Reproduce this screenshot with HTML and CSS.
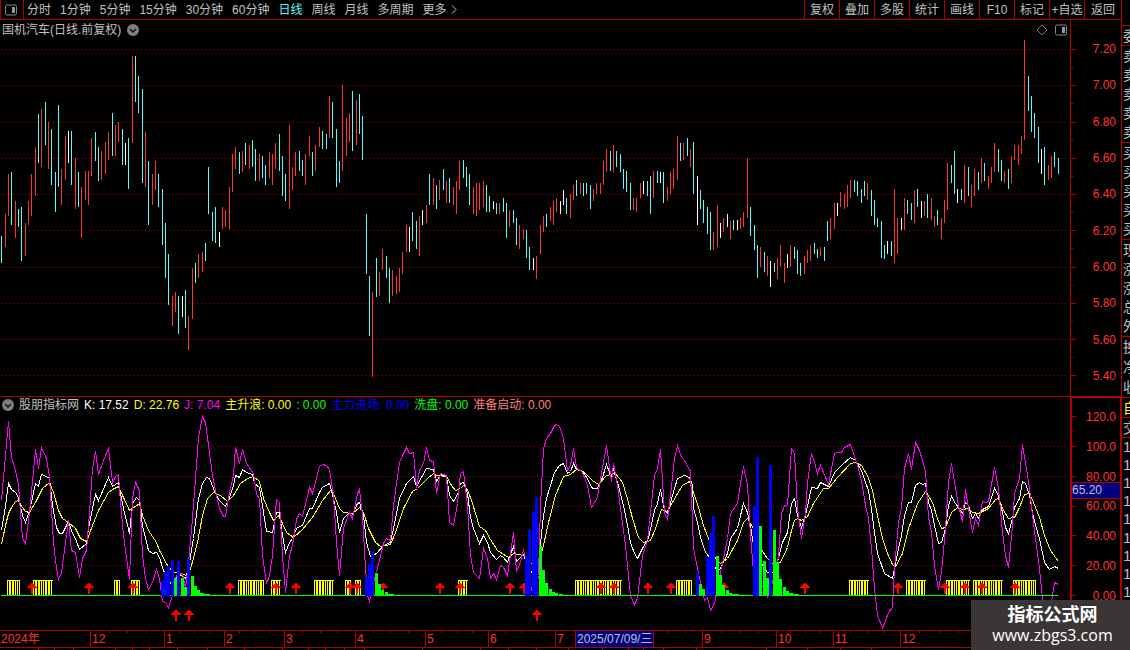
FILE: index.html
```
<!DOCTYPE html>
<html lang="zh-CN">
<head>
<meta charset="UTF-8" />
<meta name="viewport" content="width=device-width, initial-scale=1.0"/>
<title>国机汽车 日线</title>
<link rel="stylesheet" href="styles.css">
</head>
<body>
<div class="app">
    <main class="main">
        <nav class="toolbar">
            <button class="layout-btn" aria-label="布局">
                <svg width="12" height="12" viewBox="0 0 12 12"><rect x="0.5" y="1" width="11" height="10" rx="1.5" fill="none" stroke="#888"/><rect x="7" y="3" width="3" height="6" fill="#999"/></svg>
            </button>
            <div class="periods">
                <button>分时</button>
                <button>1分钟</button>
                <button>5分钟</button>
                <button>15分钟</button>
                <button>30分钟</button>
                <button>60分钟</button>
                <button class="active">日线</button>
                <button>周线</button>
                <button>月线</button>
                <button>多周期</button>
                <button class="more">更多<svg width="6" height="9" viewBox="0 0 6 9"><path d="M1 0.5 L5 4.5 L1 8.5" fill="none" stroke="#c0c0c0"/></svg></button>
            </div>
            <div class="actions">
                <button>复权</button>
                <button>叠加</button>
                <button>多股</button>
                <button>统计</button>
                <button>画线</button>
                <button>F10</button>
                <button>标记</button>
                <button>+自选</button>
                <button>返回</button>
            </div>
        </nav>

        <section class="panel price">
            <div class="plot">
                <svg id="price-chart" viewBox="0 20 1070 376" preserveAspectRatio="none"></svg>
                <div class="title">
                    <span>国机汽车(日线.前复权)</span>
                    <svg width="12" height="12" viewBox="0 0 12 12"><circle cx="6" cy="6" r="6" fill="#808080"/><path d="M3 5 L6 8 L9 5" fill="none" stroke="#111" stroke-width="1.5"/></svg>
                </div>
                <div class="tools">
                    <svg width="12" height="12" viewBox="0 0 12 12"><path d="M6 1 L11 6 L6 11 L1 6 Z" fill="none" stroke="#777"/></svg>
                    <svg width="12" height="12" viewBox="0 0 12 12"><rect x="0.5" y="1" width="11" height="10" rx="1.5" fill="none" stroke="#888"/><rect x="7" y="3" width="3" height="6" fill="#999"/></svg>
                </div>
            </div>
            <div class="axis">
                <svg id="price-ticks" class="ticks" viewBox="0 20 8 376" preserveAspectRatio="none"></svg>
                <span>7.20</span><span>7.00</span><span>6.80</span><span>6.60</span><span>6.40</span>
                <span>6.20</span><span>6.00</span><span>5.80</span><span>5.60</span><span>5.40</span>
            </div>
        </section>

        <section class="panel indicator">
            <div class="plot">
                <svg id="kdj-chart" viewBox="0 397 1070 233" preserveAspectRatio="none"></svg>
                <div class="title legend">
                    <svg width="12" height="12" viewBox="0 0 12 12"><circle cx="6" cy="6" r="6" fill="#808080"/><path d="M3 5 L6 8 L9 5" fill="none" stroke="#111" stroke-width="1.5"/></svg>
                    <span class="name">股朋指标网</span>
                    <span class="white">K: 17.52</span>
                    <span class="yellow">D: 22.76</span>
                    <span class="magenta">J: 7.04</span>
                    <span class="yellow">主升浪: 0.00</span>
                    <span class="green">: 0.00</span>
                    <span class="blue">主力进场: 0.00</span>
                    <span class="green">洗盘: 0.00</span>
                    <span class="pink">准备启动: 0.00</span>
                </div>
            </div>
            <div class="axis">
                <svg id="kdj-ticks" class="ticks" viewBox="0 398 8 232" preserveAspectRatio="none"></svg>
                <span>120.0</span><span>100.0</span><span>80.00</span><span>60.00</span>
                <span>40.00</span><span>20.00</span><span>0.00</span>
                <b class="cursor-value">65.20</b>
            </div>
        </section>

        <footer class="timeline">
            <svg id="time-ticks" viewBox="0 630 1070 20" preserveAspectRatio="none"></svg>
            <div class="months">
                <span>2024年</span><span>12</span><span>1</span><span>2</span><span>3</span><span>4</span><span>5</span><span>6</span><span>7</span>
                <span class="cursor-date">2025/07/09/三</span>
                <span>9</span><span>10</span><span>11</span><span>12</span>
            </div>
        </footer>
    </main>

    <aside class="quote">
        <div class="head"></div>
        <div class="rows single"><span>委</span></div>
        <div class="rows"><span>卖</span><span>卖</span><span>卖</span><span>卖</span><span>卖</span></div>
        <div class="rows"><span>买</span><span>买</span><span>买</span><span>买</span><span>买</span></div>
        <div class="rows"><span>现</span><span>涨</span><span>涨</span><span>总</span><span>外</span></div>
        <div class="rows three"><span>换</span><span>净</span><span>收</span></div>
        <div class="rows single own"><span>自</span></div>
        <div class="rows single"><span>交</span></div>
        <div class="rows trades"><span>1</span><span>1</span><span>1</span><span>1</span><span>1</span><span>1</span><span>1</span><span>1</span><span>1</span></div>
    </aside>

    <div class="watermark">
        <strong>指标公式网</strong>
        <span>www.zbgs3.com</span>
    </div>
</div>
<script src="chart.js"></script>
</body>
</html>
```
FILE: styles.css
```
* {
    box-sizing: border-box;
}
body {
    margin: 0;
    background-color: #000;
    color: #c0c0c0;
    font-family: "Liberation Sans", "Noto Sans CJK SC", sans-serif;
    font-size: 12px;
    line-height: 16px;
}
button {
    font: inherit;
    color: inherit;
    background: none;
    border: none;
    padding: 0;
    cursor: pointer;
    white-space: nowrap;
}
svg {
    display: block;
}
.app {
    position: relative;
    display: grid;
    grid-template-columns: 1fr 9px;
    height: 100vh;
    overflow: hidden;
}
.main {
    display: flex;
    flex-direction: column;
    min-width: 0;
}
.toolbar {
    display: flex;
    height: 20px;
    border-bottom: 1px solid #b00000;
}
.layout-btn {
    width: 24px;
    padding-left: 4px;
    border-left: 1px solid #b00000;
    border-right: 1px solid #b00000;
}
.periods {
    display: flex;
    gap: 9px;
    padding-left: 3px;
}
.periods .active { color: #54fcfc; }
.more {
    display: flex;
    align-items: center;
    gap: 4px;
}
.actions {
    display: flex;
    margin-left: auto;
}
.actions button {
    width: 35px;
    border-left: 1px solid #b00000;
}
.actions button:last-child { width: 37px; }
.panel {
    display: grid;
    grid-template-columns: 1fr 51px;
    min-height: 0;
}
.price { flex: 376; }
.indicator {
    flex: 233;
    border-top: 1px solid #b00000;
}
.plot {
    position: relative;
    min-width: 0;
    min-height: 0;
}
.plot > svg {
    position: absolute;
    width: 100%;
    height: 100%;
}
.title {
    position: relative;
    display: flex;
    align-items: center;
    gap: 6px;
    padding: 2px 2px 0;
    white-space: nowrap;
}
.legend { padding-top: 0; gap: 5px; }
.tools {
    position: absolute;
    top: 4px;
    right: 3px;
    display: flex;
    gap: 7px;
}
.axis {
    position: relative;
    display: flex;
    flex-direction: column;
    justify-content: space-between;
    border-left: 1px solid #b00000;
    padding: 21px 5px 12px 0;
    color: #ff3232;
    text-align: right;
    min-height: 0;
}
.indicator .axis {
    padding: 11px 4px 26px 0;
    border: 2px solid #b00000;
    border-top-width: 1px;
    border-bottom: none;
    border-right-width: 1px;
}
.ticks {
    position: absolute;
    left: 0;
    top: 0;
    width: 8px;
    height: 100%;
}
.cursor-value {
    position: absolute;
    top: 84px;
    left: 0;
    right: 0;
    background-color: #000080;
    border-top: 1px solid #b00000;
    border-bottom: 1px solid #b00000;
    color: #c0c0c0;
    font-weight: normal;
    text-align: left;
    line-height: 15px;
}
.timeline {
    position: relative;
    height: 20px;
    border-top: 1px solid #b00000;
}
.timeline svg {
    position: absolute;
    top: -1px;
    left: 0;
    width: calc(100% - 51px);
    height: 20px;
}
.months {
    display: grid;
    grid-template-columns: 90fr 74fr 60fr 60fr 71fr 70fr 63fr 67fr 20fr 79fr 48fr 74fr 67fr 278fr;
    grid-template-columns: 90fr 74fr 60fr 60fr 71fr 70fr 63fr 67fr 20fr 127fr 74fr 57fr 67fr 221fr;
    height: 17px;
    border-bottom: 1px solid #b00000;
    color: #ff3232;
    line-height: 16px;
}
.months span {
    border-left: 1px solid #b00000;
    padding-left: 1px;
    white-space: nowrap;
    min-width: 0;
}
.months span:first-child { border-left: none; }
.months .cursor-date {
    justify-self: start;
    width: 79px;
    background-color: #000080;
    border-right: 1px solid #b00000;
    color: #c0c0c0;
}
.white { color: #fff; }
.yellow { color: #ff0; }
.magenta { color: #f0f; }
.green { color: #0f0; }
.blue { color: #00f; }
.pink { color: #ff8080; }
.quote {
    border-left: 1px solid #b00000;
    overflow: hidden;
}
.head {
    height: 26px;
    border-bottom: 1px solid #b00000;
}
.rows {
    display: flex;
    flex-direction: column;
    justify-content: space-around;
    height: 97px;
    padding-left: 1px;
    border-bottom: 1px solid #b00000;
    font-size: 14px;
}
.single { height: 20px; }
.three { height: 61px; }
.own { color: #ff0; }
.trades { height: 164px; }
.trades span { font-size: 15px; }
.watermark {
    position: absolute;
    right: 0;
    bottom: 0;
    width: 159px;
    height: 50px;
    padding-left: 4px;
    background-color: #3b3636;
    color: #fff;
    text-align: center;
    display: flex;
    flex-direction: column;
    justify-content: center;
    line-height: 20px;
}
.watermark strong { font-size: 18px; }
.watermark span {
    font-family: "Open Sans", sans-serif;
    font-size: 16px;
}
```
FILE: chart.js
```
// x, high, low, per bar: r = up, d = down, w = unchanged
const bars = `
d1,236,263 r5,214,247 r8,174,216 d11,172,225 r15,201,238 d18,209,227 d21,207,261 r25,223,256 r28,201,225 r31,174,216
r35,147,196 d38,114,163 r41,109,167 d45,102,145 r48,122,169 d51,129,185 d55,172,212 d58,105,187 r61,169,205 r65,136,180
w68,131,163 d71,131,185 r75,158,209 d78,172,207 r81,187,238 r85,171,200 r88,171,205 r91,138,176 d95,132,161 d98,147,181
r101,151,180 r105,142,174 r108,132,160 d112,113,156 r115,125,156 r118,122,142 d122,129,165 w125,143,165 d128,138,189 r132,56,143
d135,56,102 d138,76,113 d142,89,183 r145,132,187 d148,161,225 r152,174,205 r155,161,190 d158,174,207 d162,189,245 d165,223,278
d168,254,305 r172,296,326 r175,292,312 d178,296,334 w182,296,317 d185,290,328 r188,316,350 r192,268,319 d195,263,283 r198,254,278
r202,252,272 d205,243,261 d208,167,214 d212,212,241 d215,207,243 w219,232,247 r222,207,229 r225,210,227 r229,187,229 r232,154,192
r235,147,169 d239,152,174 r242,151,172 d245,143,165 r249,145,169 d252,140,167 d255,149,181 r259,154,181 d262,156,178 d265,165,185
r269,152,178 r272,154,185 r275,143,169 d279,134,171 d282,156,196 d285,174,201 r289,125,209 r292,167,190 r295,152,176 d299,151,171
d302,160,176 r305,154,185 r309,136,156 d312,152,176 r315,145,171 r319,127,147 d322,131,149 d326,134,149 r329,96,138 d332,102,138
d336,129,187 d339,161,183 r342,85,171 r346,118,156 r349,113,142 d352,91,151 r356,100,145 d359,94,134 d362,116,160 d366,214,274
d369,276,336 r372,292,377 d376,258,297 r379,272,296 r382,249,270 d386,256,278 d389,268,303 r392,270,296 r396,276,294 r399,268,292
r402,252,274 r406,225,252 w409,227,252 d412,212,241 d416,221,249 r419,216,256 w422,210,225 r426,205,223 d429,174,205 r433,178,205
d436,185,209 r439,180,200 d443,169,190 r446,181,203 d449,178,203 r453,187,205 r456,181,214 r459,161,190 d463,160,178 d466,167,187
d469,174,205 r473,187,214 r476,183,216 r479,183,210 r483,181,207 d486,185,212 d489,196,212 w493,201,209 d496,203,214 r499,203,214
d503,198,212 d506,203,238 r509,210,227 d513,210,223 d516,218,245 r519,225,249 r523,229,239 d526,230,258 d529,247,270 w533,258,270
r536,256,279 r540,225,254 r543,216,232 d546,214,227 r550,207,221 r553,201,225 r556,198,212 w560,201,214 w563,190,205 d566,198,214
r570,194,218 r573,185,200 d576,180,196 r580,183,194 d583,183,196 d586,183,194 d590,185,209 r593,189,201 r596,183,194 r600,183,194
r603,161,185 r606,149,172 d610,151,171 r613,145,172 d616,151,167 d620,154,172 d623,169,189 d626,171,192 d630,183,210 r633,198,210
r636,198,212 r640,183,198 w643,181,194 d647,181,196 d650,176,214 r653,171,198 d657,171,183 w660,172,183 d663,172,203 r667,187,201
r670,172,194 r673,169,189 r677,136,180 d680,143,161 r683,143,160 d687,138,156 r690,149,167 d693,142,194 w697,176,225 d700,190,209
d703,200,223 d707,207,234 d710,212,250 r713,232,250 r717,205,247 w720,223,238 r723,218,232 w727,214,227 r730,221,239 d733,220,230
w737,220,230 r740,218,229 r743,212,227 r747,158,218 d750,207,236 d754,225,250 d757,245,278 r760,247,267 d764,252,272 r767,256,276
w770,261,287 d774,263,272 r777,258,279 r780,245,267 r784,263,283 w787,254,268 r790,245,267 d794,247,259 d797,250,274 d800,263,276
r804,256,274 r807,250,263 r810,245,261 d814,243,254 d817,249,258 r820,247,256 d824,247,261 d827,221,241 r830,218,239 r834,203,229
w837,203,216 r840,192,207 r844,194,209 r847,185,207 r850,180,198 d854,180,192 d857,181,196 d861,189,203 d864,181,196 r867,183,200
d871,190,216 d874,200,225 d877,218,227 d881,221,258 d884,245,259 w887,241,254 d891,241,256 r894,189,263 r897,218,254 w901,218,230
r904,198,230 d907,200,214 d911,203,220 r914,190,223 d917,189,207 w921,201,218 r924,201,216 d927,194,218 r931,198,220 r934,216,227
d937,210,225 r941,218,239 r944,200,223 r947,163,210 d951,165,183 d954,151,194 w957,189,203 d961,189,200 r964,165,203 d968,167,196
r971,185,207 r974,169,196 d978,172,190 r981,158,183 d984,163,181 r988,176,189 r991,167,183 r994,143,172 d998,149,172 d1001,160,181
r1004,171,183 d1008,169,189 r1011,156,183 r1014,145,160 r1018,145,165 r1021,136,154 r1024,40,140 d1028,76,111 d1031,96,132 d1034,113,138
d1038,127,163 w1041,149,174 d1044,147,185 r1048,165,180 r1051,156,178 d1054,152,167 d1058,158,174`;

const lineJ = '1,500 8,421 11,457 15,470 18,485 22,538 25,543 29,512 35,449 38,468 41,447 46,458 49,477 53,542 56,568 58,579 61,572 68,520 71,550 75,552 79,577 82,558 86,550 89,512 92,468 95,451 98,474 103,460 108,448 112,482 115,476 118,474 120,502 123,535 129,579 132,498 135,482 139,490 142,555 145,578 148,589 152,582 156,569 159,578 162,601 165,602 168,607 172,595 175,577 178,573 182,573 185,588 188,562 192,518 198,437 202,416 205,422 212,475 216,495 219,508 223,516 225,516 229,492 233,475 235,447 239,463 242,449 246,463 253,473 256,494 259,498 262,555 266,583 269,575 272,555 276,499 279,502 282,555 285,592 289,555 292,545 296,519 299,513 302,516 309,487 312,493 319,466 322,464 326,465 329,469 333,495 336,542 339,575 343,528 347,517 349,512 352,518 357,493 359,489 362,515 365,568 367,595 369,601 372,585 376,572 383,543 386,538 390,540 393,505 399,462 402,455 406,447 409,453 413,452 416,487 419,470 423,463 426,447 429,460 433,461 436,493 440,473 446,475 449,522 453,525 457,503 460,473 463,471 467,505 470,555 473,572 479,578 483,548 487,558 490,578 493,573 496,579 500,565 503,567 507,575 513,532 516,571 520,562 523,550 527,565 531,590 536,590 538,575 540,505 543,448 546,438 550,433 554,425 556,424 559,426 563,438 567,470 570,465 573,448 576,467 582,472 587,485 591,507 597,497 600,478 606,445 611,481 613,463 617,485 620,508 625,545 630,595 634,604 637,598 642,555 647,540 650,512 654,475 657,468 660,449 664,512 667,519 670,495 674,458 677,445 681,457 684,460 690,471 693,548 697,568 700,582 704,600 707,597 710,610 714,603 718,582 723,558 727,538 730,513 737,503 740,483 743,466 747,485 750,535 753,572 757,580 763,587 767,596 772,582 778,555 781,513 784,505 787,505 791,448 794,453 797,508 801,538 805,512 807,482 811,453 814,462 817,473 820,465 828,484 834,453 837,452 841,452 844,447 850,444 857,465 861,480 865,505 868,518 871,548 874,588 877,615 882,627 884,623 888,612 892,607 894,568 898,522 901,507 904,468 908,453 911,469 915,442 919,450 922,460 925,471 928,517 931,532 934,565 938,589 941,572 945,528 948,482 951,463 955,488 958,505 962,521 965,489 968,508 972,532 975,518 978,525 982,501 985,502 988,501 994,467 998,488 1002,532 1005,555 1008,567 1012,525 1014,493 1019,478 1022,444 1025,462 1029,488 1032,515 1035,538 1039,568 1042,598 1046,612 1051,602 1054,582 1058,584';
const lineK = '1,530 5,505 8,483 11,489 15,492 18,497 22,515 25,522 29,510 32,497 35,483 38,486 41,474 46,476 49,478 52,505 56,527 59,533 62,533 68,521 72,533 75,538 79,549 86,543 88,528 92,508 95,494 98,500 108,477 112,486 118,482 123,508 129,533 132,503 136,497 139,500 142,525 148,550 152,553 156,552 159,557 163,570 168,580 173,586 178,573 185,578 188,568 193,538 198,498 202,483 206,477 209,478 215,493 219,500 225,506 229,497 233,485 235,475 239,477 242,469 246,472 252,474 254,483 259,487 263,512 266,531 272,532 276,512 279,512 282,535 285,552 289,542 292,538 296,528 299,526 302,525 309,508 312,508 319,492 322,487 329,483 333,498 336,512 339,532 343,518 349,512 352,514 357,503 359,502 363,515 366,542 370,556 376,553 383,545 390,542 393,528 399,498 406,483 413,476 416,486 426,468 433,469 436,481 440,474 446,476 449,495 453,501 457,494 460,483 463,482 467,493 470,517 473,528 479,543 483,535 487,542 490,552 496,559 500,555 503,557 507,562 513,546 516,561 523,554 527,565 532,573 538,562 543,515 546,498 550,485 554,472 559,465 563,463 567,473 570,471 573,463 576,469 582,471 587,478 591,487 593,488 597,488 602,477 606,464 611,477 613,469 617,482 623,505 627,525 630,542 634,553 637,558 642,548 648,538 654,510 657,503 660,489 664,510 667,513 672,495 677,478 684,475 689,477 692,485 693,508 697,522 700,537 705,552 710,558 717,571 720,568 727,553 730,538 737,528 740,515 743,503 747,512 750,525 753,545 760,562 767,572 773,572 778,558 782,542 787,532 791,503 794,498 797,515 801,527 805,515 811,487 817,488 820,482 828,486 834,472 841,465 850,457 855,460 861,470 865,482 868,490 871,508 874,532 877,553 884,573 892,578 894,568 898,548 901,535 904,515 908,502 911,502 915,485 919,482 922,484 925,483 928,502 931,510 934,525 938,543 941,542 945,528 948,505 951,496 955,503 962,513 965,502 968,505 972,518 975,513 978,518 982,509 988,506 994,488 998,495 1002,512 1005,527 1008,533 1012,518 1014,507 1019,498 1022,481 1025,483 1029,495 1032,512 1035,525 1039,538 1044,562 1049,569 1054,566 1058,568';
const lineD = '1,544 5,525 8,513 11,507 15,501 18,500 22,507 25,511 29,512 35,502 42,488 49,482 53,492 58,510 62,518 68,522 75,528 80,538 86,541 92,525 98,510 108,492 112,489 118,486 123,497 129,510 132,508 139,503 142,515 148,530 156,542 159,550 167,565 173,572 182,573 187,576 191,565 197,542 202,515 207,498 213,492 220,495 227,501 233,495 240,483 247,478 253,476 259,481 263,498 269,512 273,520 278,515 282,523 286,532 293,537 302,529 312,517 322,500 330,490 333,493 339,508 343,512 352,513 359,507 363,512 368,528 375,542 380,546 390,544 395,532 403,508 412,491 417,488 427,478 433,473 436,475 446,476 451,485 455,490 460,488 463,485 467,489 472,503 479,526 485,530 490,539 497,550 508,557 513,553 523,555 530,563 538,563 543,545 548,522 555,495 563,476 570,474 576,469 583,471 592,480 598,484 606,475 615,473 622,482 627,498 632,518 638,537 643,542 650,540 655,528 661,509 667,511 673,500 682,485 689,481 693,492 698,507 703,525 708,538 713,555 720,563 727,558 737,540 743,522 747,518 753,528 760,548 767,558 773,564 780,562 787,547 791,530 794,520 797,518 801,520 807,516 813,503 823,488 828,488 837,477 850,463 855,462 861,465 867,475 872,490 877,515 882,538 887,553 892,564 895,566 902,553 908,528 911,520 917,503 925,491 932,502 937,518 941,528 945,527 951,512 957,507 962,509 968,508 972,512 978,513 988,508 995,499 998,498 1003,510 1008,518 1014,517 1019,507 1024,494 1029,493 1033,502 1039,517 1044,535 1050,550 1058,561';

// x, width, top
const blueBars = [[161,3,581],[164,3,572],[167,3,566],[171,3,560],[177,3,561],[187,3,558],[365,3,577],[368,3,564],[371,3,551],[525,3,555],[528,3,530],[532,3,512],[535,3,497],[696,3,573],[706,3,557],[709,3,534],[712,3,516],[753,3,506],[756,3,457],[769,3,465]];
const greenBars = [[174,3,578],[181,3,578],[184,3,587],[191,3,576],[194,3,586],[197,3,590],[200,4,593],[204,6,594],[375,3,573],[378,3,584],[381,3,590],[385,3,592],[388,6,594],[539,3,546],[542,3,570],[545,3,583],[549,3,589],[552,3,592],[555,3,593],[559,4,594],[699,3,584],[702,3,589],[716,3,556],[719,3,575],[722,3,585],[726,3,590],[729,3,593],[732,7,594],[759,3,526],[763,3,561],[766,3,578],[773,3,530],[776,3,562],[779,3,579],[783,3,587],[786,3,591],[789,4,593],[793,6,594]];
const combs = [[7,20],[33,53],[114,120],[131,140],[238,264],[271,281],[314,334],[345,351],[355,361],[458,468],[575,622],[676,692],[849,869],[906,926],[946,970],[973,1003],[1013,1036]];
const arrows = [32,89,133,230,276,296,350,357,383,440,460,510,524,601,614,648,671,724,805,898,945,965,982,1015];
const lowArrows = [176,189,537];

const colors = { r: '#ff3232', d: '#54fcfc', w: '#ffffff' };
const line = '#b00000';

function rect(x, y, w, h, fill) {
    return `<rect x="${x}" y="${y}" width="${w}" height="${h}" fill="${fill}"/>`;
}
function grid(rows) {
    return rows.map(y => `<path d="M1 ${y + 0.5}H1069" stroke="${line}" stroke-dasharray="1 3"/>`).join('');
}
function curve(points, color) {
    return `<polyline points="${points}" transform="translate(0.5 0.5)" fill="none" stroke="${color}"/>`;
}
function arrow(x, y) {
    return `<path d="M${x} ${y}l5 6h-4v6h-2v-6h-4z" fill="#f00"/>`;
}
function draw(id, shapes) {
    document.getElementById(id).innerHTML = `<g shape-rendering="crispEdges">${shapes}</g>`;
}

const priceRows = [49, 85, 122, 158, 194, 230, 267, 303, 339, 375];
const kdjRows = [446, 476, 506, 535, 565];

draw('price-chart', grid(priceRows) + bars.trim().split(/\s+/).map(bar => {
    const [x, high, low] = bar.slice(1).split(',').map(Number);
    return rect(x, high, 1, low - high, colors[bar[0]]);
}).join(''));

draw('price-ticks', priceRows.map(y => rect(0, y, 5, 1, line) + (y < 375 ? rect(0, y + 18, 2, 1, line) : '')).join(''));

draw('kdj-ticks', [416, ...kdjRows, 595].map(y => rect(0, y, 4, 1, line) + (y < 595 ? rect(0, y + 15, 1, 1, line) : '')).join(''));

let comb = '';
for (const [from, to] of combs) {
    comb += rect(from, 580, to - from, 1, '#ff0');
    for (let x = from; x < to - 1; x += 10 / 3) {
        comb += rect(Math.floor(x), 580, 1, 15, '#ff0') + rect(Math.floor(x) + 2, 580, 1, 15, '#ff0');
    }
}

draw('kdj-chart', grid(kdjRows)
    + rect(1058, 595, 1, 1, line) + rect(1062, 595, 1, 1, line) + rect(1066, 595, 1, 1, line)
    + curve(lineK, '#fff') + curve(lineD, '#ff0') + curve(lineJ, '#f0f')
    + comb
    + arrows.map(x => arrow(x, 582)).join('')
    + lowArrows.map(x => arrow(x, 609)).join('')
    + rect(1, 595, 1057, 1, '#0f0')
    + greenBars.map(([x, w, y]) => rect(x, y, w, 596 - y, '#0f0')).join('')
    + blueBars.map(([x, w, y]) => rect(x, y, w, 596 - y, '#00f')).join(''));

const upperTicks = [109,127,146,179,194,209,239,254,269,302,320,337,373,390,408,441,457,472,505,521,538,667,685,721,739,758,790,805,819,850,867,883,919,939,958];
const lowerTicks = [38,54,73,115,132,149,177,207,244,282,308,325,344,364,422,480,508,536,568,602,628,643,663,696,766,807,840,871];
draw('time-ticks', upperTicks.map(x => rect(x, 631, 1, 2, line)).join('')
    + lowerTicks.map(x => rect(x, 647, 1, 3, line)).join(''));
```
